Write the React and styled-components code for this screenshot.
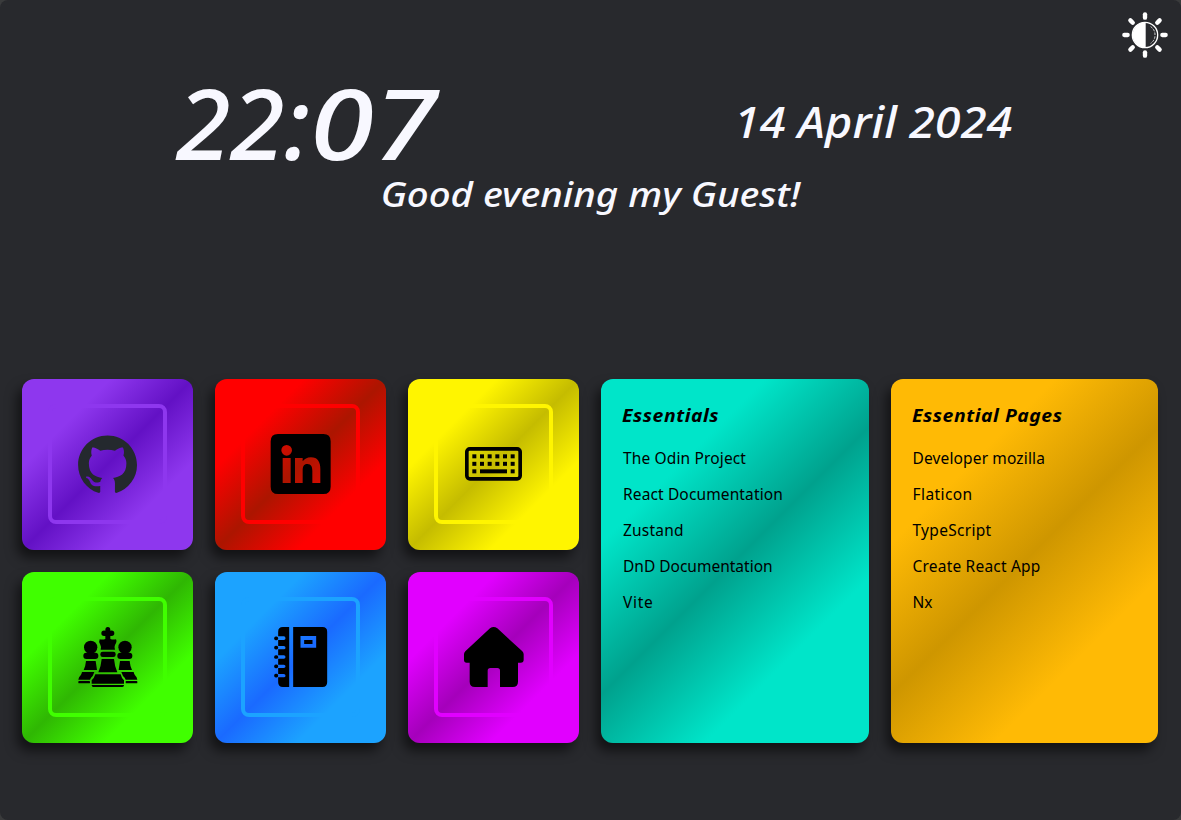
import React from "react";
import styled, { createGlobalStyle } from "styled-components";

const GlobalStyle = createGlobalStyle`
  * { box-sizing: border-box; }
  body { margin: 0; background: #3a3b3c; }
`;

const Page = styled.main`
  position: relative;
  width: 1181px;
  height: 820px;
  overflow: hidden;
  border-radius: 8px;
  background: #28292d;
  color: ghostwhite;
  font-family: "Noto Sans", "Open Sans", sans-serif;
`;

const ThemeButton = styled.button`
  position: absolute;
  top: 12px;
  right: 13px;
  width: 46px;
  height: 46px;
  padding: 0;
  border: 0;
  background: none;
  svg { display: block; width: 46px; height: 46px; }
`;

const Header = styled.header`
  height: 379px;
  padding-top: 68px;
  font-style: italic;
  font-weight: 500;
  white-space: nowrap;
`;

const Clock = styled.div`
  display: flex;
  height: 105px;
  padding-left: 176px;
`;

const Time = styled.div`
  width: 558px;
  font-size: 99px;
  line-height: 108px;
  letter-spacing: -0.5px;
`;

const Minutes = styled.span`
  display: inline-block;
  letter-spacing: 0;
  transform: scaleX(1.17);
  transform-origin: left;
`;

const DateText = styled.div`
  font-size: 43.5px;
  line-height: 107px;
  transform: scaleX(1.078);
  transform-origin: left;
`;

const Greeting = styled.h1`
  margin: 0;
  font-size: 34.5px;
  font-weight: 500;
  line-height: 42px;
  text-align: center;
  transform: scaleX(1.114);
`;

const Board = styled.section`
  display: grid;
  grid-template-columns: repeat(3, 171px) 268px 267px;
  grid-template-rows: repeat(2, 171px);
  gap: 22px;
  padding-left: 22px;
`;

const Card = styled.div`
  border-radius: 12px;
  background: linear-gradient(135deg, ${(p) => p.$base} 26%, ${(p) => p.$shade} 50%, ${(p) => p.$base} 74%);
  box-shadow: -5px 8px 12px rgba(0, 0, 0, 0.55);
`;

const Tile = styled(Card)`
  display: flex;
  justify-content: center;
  align-items: flex-start;
  padding-top: 25px;
`;

const Frame = styled.div`
  width: 119px;
  height: 120px;
  padding: 26px 25px;
  border: 4px solid ${(p) => p.$base};
  border-radius: 8px;
  svg { display: block; width: 60px; height: 60px; overflow: visible; }
`;

const ListCard = styled(Card)`
  grid-row: 1 / 3;
  grid-column: ${(p) => p.$column};
  padding: 21px 21px;
  color: #000;
`;

const ListTitle = styled.h2`
  margin: 0 0 13px;
  font-size: 18px;
  line-height: 30px;
  font-style: italic;
  font-weight: 700;
  letter-spacing: 0.5px;
  white-space: nowrap;
  transform: scaleX(1.077);
  transform-origin: left;
`;

const Links = styled.ul`
  margin: 0;
  padding: 0 0 0 ${(p) => p.$indent}px;
  list-style: none;
`;

const LinkRow = styled.li`
  height: 36px;
  font-size: 15.5px;
  line-height: 30px;
  letter-spacing: ${(p) => p.$track}px;
  white-space: nowrap;
`;

const GithubIcon = () => (
  <svg viewBox="-0.3 -0.4 16.3 16.3" fill="#24292e">
    <path d="M8 0C3.58 0 0 3.58 0 8c0 3.54 2.29 6.53 5.47 7.59.4.07.55-.17.55-.38 0-.19-.01-.82-.01-1.49-2.01.37-2.53-.49-2.69-.94-.09-.23-.48-.94-.82-1.13-.28-.15-.68-.52-.01-.53.63-.01 1.08.58 1.23.82.72 1.21 1.87.87 2.33.66.07-.52.28-.87.51-1.07-1.78-.2-3.64-.89-3.64-3.95 0-.87.31-1.59.82-2.15-.08-.2-.36-1.02.08-2.12 0 0 .67-.21 2.2.82.64-.18 1.32-.27 2-.27.68 0 1.36.09 2 .27 1.53-1.04 2.2-.82 2.2-.82.44 1.1.16 1.92.08 2.12.51.56.82 1.27.82 2.15 0 3.07-1.87 3.75-3.65 3.95.29.25.54.73.54 1.48 0 1.07-.01 1.93-.01 2.2 0 .21.15.46.55.38A8.013 8.013 0 0016 8c0-4.42-3.58-8-8-8z" />
  </svg>
);

const LinkedinIcon = () => (
  <svg viewBox="-2 0 180 180">
    <path
      fillRule="evenodd"
      d="M22 0H158Q180 0 180 22V158Q180 180 158 180H22Q0 180 0 158V22Q0 0 22 0ZM48 33A16 16 0 1 0 48 65A16 16 0 1 0 48 33ZM36 72V147H60V72ZM73 72V147H96V109C96 98 99 90 110 90C122 90 125 99 125 111V147H149V105C149 84 141 70 121 70C109 70 101 75 96 82V72Z"
    />
  </svg>
);

const KeyboardIcon = () => (
  <svg viewBox="-1 5 180 180">
    <rect x="10.5" y="49.5" width="160" height="90" rx="9" fill="none" stroke="#000" strokeWidth="11" />
    {[66, 88.5, 111].map((y, row) =>
      [27, 50, 73, 96, 119, 142]
        .filter((_, i) => row < 2 || i === 0 || i === 5)
        .map((x) => <rect key={`${x}-${y}`} x={x} y={y} width="12" height="12" />)
    )}
    <rect x="50" y="111" width="81" height="12" />
  </svg>
);

const Pawn = () => (
  <>
    <circle cx="38" cy="61" r="20" />
    <rect x="16" y="77" width="45" height="19" rx="9" />
    <path d="M24 102H53L57 129H17Q23 116 24 102ZM12 135H49Q45 148 39 152L36 158H1Q2 150 8 145Q11 141 12 135Z" />
    <rect x="1" y="162" width="35" height="7" rx="2" />
  </>
);

const ChessIcon = () => (
  <svg viewBox="-3 0 180 180">
    <Pawn />
    <g transform="translate(179 0) scale(-1 1)"><Pawn /></g>
    <path d="M82 9Q82 0 89.500 0Q97 0 97 9V11Q109 9 109 19Q109 29 97 27V36Q105 39 114 37Q118 44 111 54Q108 60 111 68H68Q71 60 67 53Q61 44 65 37Q74 39 82 36V27Q70 29 70 19Q70 9 82 11Z" />
    <rect x="67" y="74" width="46" height="16" rx="7" />
    <path d="M71 96H108Q110 119 118 136H61Q69 119 71 96ZM52 142H128Q131 155 138 160V170H41V160Q48 155 52 142Z" />
    <path d="M41 174H138Q138 180 133 180H46Q41 180 41 174Z" />
  </svg>
);

const NotebookIcon = () => (
  <svg viewBox="-1.5 0 180 180">
    <path
      fillRule="evenodd"
      d="M84 0H156Q170 0 170 14V166Q170 180 156 180H68V0ZM90 27V62H137V27ZM101 39H126V51H101Z"
    />
    <path d="M37 0H56V180H37Q23 180 23 166V151H40Q45 151 45 146Q45 141 40 141H23V123H40Q45 123 45 118Q45 113 40 113H23V95H40Q45 95 45 90Q45 85 40 85H23V67H40Q45 67 45 62Q45 57 40 57H23V39H40Q45 39 45 34Q45 28 40 28H23V14Q23 0 37 0Z" />
    {[34, 62, 90, 118, 146].map((y) => (
      <rect key={y} x="11" y={y - 5.5} width="12" height="11" rx="5" />
    ))}
  </svg>
);

const HomeIcon = () => (
  <svg viewBox="-2 0 180 180">
    <path d="M79 4Q90 -4 101 4L176 73Q180 77 180 82V98Q180 107 171 107H163V164Q163 180 147 180H109V131Q109 123 101 123H80Q72 123 72 131V180H34Q18 180 18 164V107H9Q1 107 1 98V82Q1 77 5 73Z" />
  </svg>
);

const SunIcon = () => (
  <svg viewBox="0 0 138 138" fill="none" stroke="#fff">
    {[0, 45, 90, 135, 180, 225, 270, 315].map((a) => (
      <path key={a} d="M69 7V17" strokeWidth="13" strokeLinecap="round" transform={`rotate(${a} 69 69)`} />
    ))}
    <circle cx="69" cy="69" r="38" strokeWidth="4" />
    <path d="M71 30A39 39 0 0 0 71 108Z" fill="#fff" stroke="none" />
    <path d="M86 44Q99 53 99 69Q99 85 86 94" strokeWidth="2.500" strokeDasharray="7 4" />
  </svg>
);

const tiles = [
  { base: "#8e37ee", shade: "#6311c5", Icon: GithubIcon },
  { base: "#ff0000", shade: "#ac1500", Icon: LinkedinIcon },
  { base: "#fff500", shade: "#c5bc00", Icon: KeyboardIcon },
  { base: "#40ff00", shade: "#2fb703", Icon: ChessIcon },
  { base: "#1ca3ff", shade: "#1a6aff", Icon: NotebookIcon },
  { base: "#e100ff", shade: "#a500bb", Icon: HomeIcon },
];

const lists = [
  {
    title: "Essentials", indent: 1, base: "#00e5c9", shade: "#00a18d", column: 4,
    links: [["The Odin Project", 0.14], ["React Documentation", 0.13], ["Zustand", 0.2], ["DnD Documentation", 0], ["Vite", 0.7]],
  },
  {
    title: "Essential Pages", indent: 0.5, base: "#ffba05", shade: "#ce9600", column: 5,
    links: [["Developer mozilla", 0.14], ["Flaticon", 0.42], ["TypeScript", 0.3], ["Create React App", 0.2], ["Nx", 0]],
  },
];

export default function App() {
  return (
    <>
      <GlobalStyle />
      <Page>
        <ThemeButton aria-label="Toggle theme"><SunIcon /></ThemeButton>
        <Header>
          <Clock>
            <Time>22:<Minutes>07</Minutes></Time>
            <DateText>14 April 2024</DateText>
          </Clock>
          <Greeting>Good evening my Guest!</Greeting>
        </Header>
        <Board>
          {tiles.map(({ base, shade, Icon }) => (
            <Tile key={base} $base={base} $shade={shade}>
              <Frame $base={base}><Icon /></Frame>
            </Tile>
          ))}
          {lists.map((list) => (
            <ListCard key={list.title} $base={list.base} $shade={list.shade} $column={list.column}>
              <ListTitle>{list.title}</ListTitle>
              <Links $indent={list.indent}>
                {list.links.map(([label, track]) => (
                  <LinkRow key={label} $track={track}>{label}</LinkRow>
                ))}
              </Links>
            </ListCard>
          ))}
        </Board>
      </Page>
    </>
  );
}
